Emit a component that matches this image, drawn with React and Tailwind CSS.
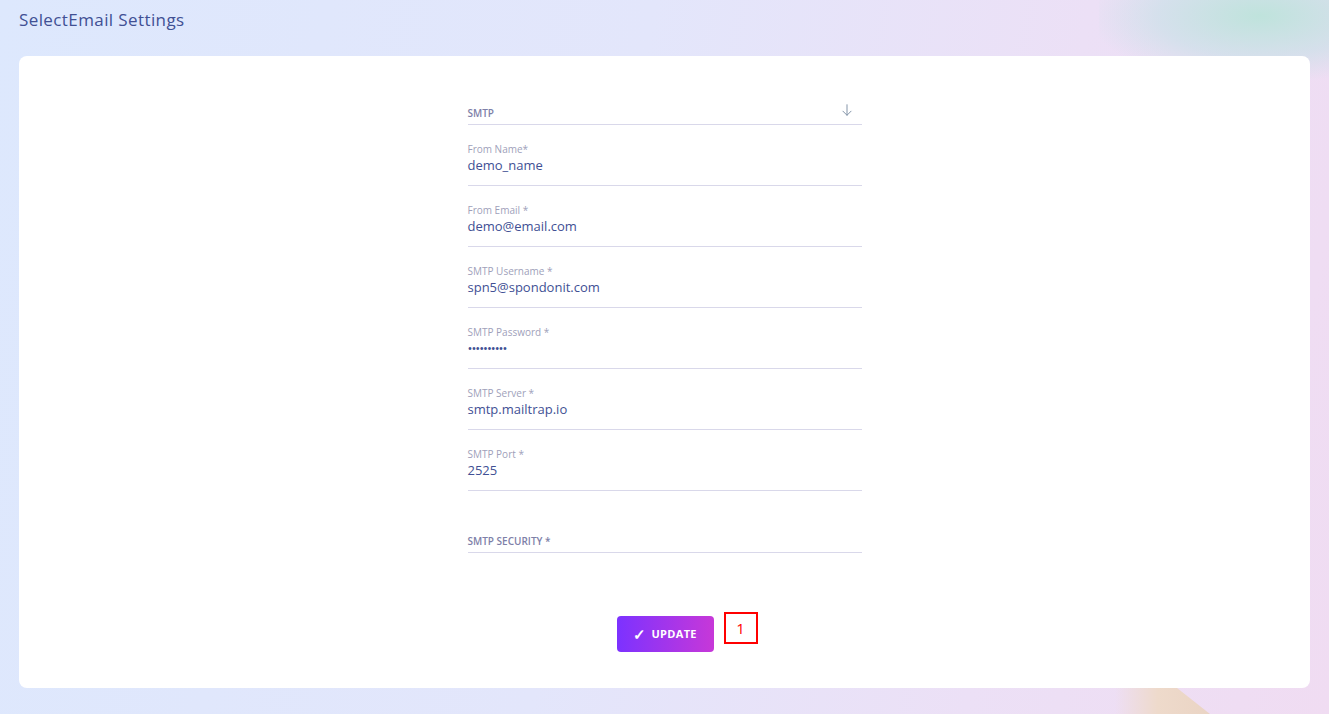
import React from "react";

const FIELDS = [
  { label: "From Name*", value: "demo_name" },
  { label: "From Email *", value: "demo@email.com" },
  { label: "SMTP Username *", value: "spn5@spondonit.com" },
  { label: "SMTP Password *", value: "••••••••••", secret: true },
  { label: "SMTP Server *", value: "smtp.mailtrap.io" },
  { label: "SMTP Port *", value: "2525" },
];

const ArrowDown = () => (
  <svg className="h-3.5 w-3.5" viewBox="0 0 24 24" fill="none" stroke="currentColor" strokeWidth={1.6} strokeLinecap="round">
    <line x1="12" y1="3" x2="12" y2="21" />
    <polyline points="5 14 12 21 19 14" />
  </svg>
);

function Field({ label, value, secret }) {
  return (
    <div className="flex h-[61px] flex-col border-b border-[#d9d8ea] pt-[18px]">
      <span className="text-[10px] leading-[12px] text-[#a09fba]">{label}</span>
      <span className={`mt-[2px] text-[13px] leading-[16px] text-[#415094] ${secret ? "text-[9px] tracking-[-1px]" : ""}`}>
        {value}
      </span>
    </div>
  );
}

export default function App() {
  return (
    <div
      className="relative h-[714px] w-full overflow-hidden bg-[linear-gradient(100deg,#dde8fd_0%,#e3e6fb_45%,#ece0f6_75%,#f0dcf2_100%)] font-['Open_Sans',sans-serif]"
    >
      {/* soft background blobs */}
      <div className="pointer-events-none absolute right-0 top-0 h-[80px] w-[230px] bg-[radial-gradient(ellipse_at_70%_20%,#bfe3dc_0%,rgba(197,225,230,0.6)_45%,transparent_75%)]" />
      <div className="pointer-events-none absolute bottom-0 right-[119px] h-[30px] w-[95px] bg-[linear-gradient(90deg,rgba(240,220,205,0)_0%,#eedacb_45%,#ead4c4_100%)] [clip-path:polygon(0_0,60%_0,100%_100%,0_100%)]" />

      <div className="relative flex flex-col px-[19px]">
        <h1 className="h-[56px] pt-[8px] text-[17px] leading-[24px] tracking-[0.4px] text-[#415094]">SelectEmail Settings</h1>

        <div className="flex h-[632px] flex-col items-center rounded-lg bg-white pt-[47px]">
          <div className="flex w-[394px] flex-col">
            <div className="flex h-[22px] items-start justify-between border-b border-[#d9d8ea] pt-[3px]">
              <span className="text-[10px] font-semibold leading-[14px] text-[#7e80a8]">SMTP</span>
              <span className="mr-[8px] mt-[-3px] text-[#7b8da3]">
                <ArrowDown />
              </span>
            </div>

            {FIELDS.map((f) => (
              <Field key={f.label} {...f} />
            ))}

            <div className="flex h-[62px] flex-col justify-end border-b border-[#d9d8ea] pb-[4px]">
              <span className="text-[10px] font-semibold leading-[14px] text-[#7e80a8]">SMTP SECURITY *</span>
            </div>
          </div>

          <div className="mt-[63px] flex items-start">
            <button
              type="button"
              className="ml-[45px] flex h-[36px] w-[97px] items-center justify-center gap-[5px] rounded-[4px] bg-[linear-gradient(90deg,#7c32ff_0%,#c738d8_100%)] text-[11px] font-bold tracking-[0.3px] text-white"
            >
              <span className="text-[15px] font-bold leading-none">✓</span>
              <span>UPDATE</span>
            </button>
            <div className="ml-[10px] mt-[-4px] flex h-[32px] w-[34px] items-center justify-center border-2 border-[#ff0000] text-[15px] leading-none text-[#ff0000]">
              1
            </div>
          </div>
        </div>
      </div>
    </div>
  );
}
